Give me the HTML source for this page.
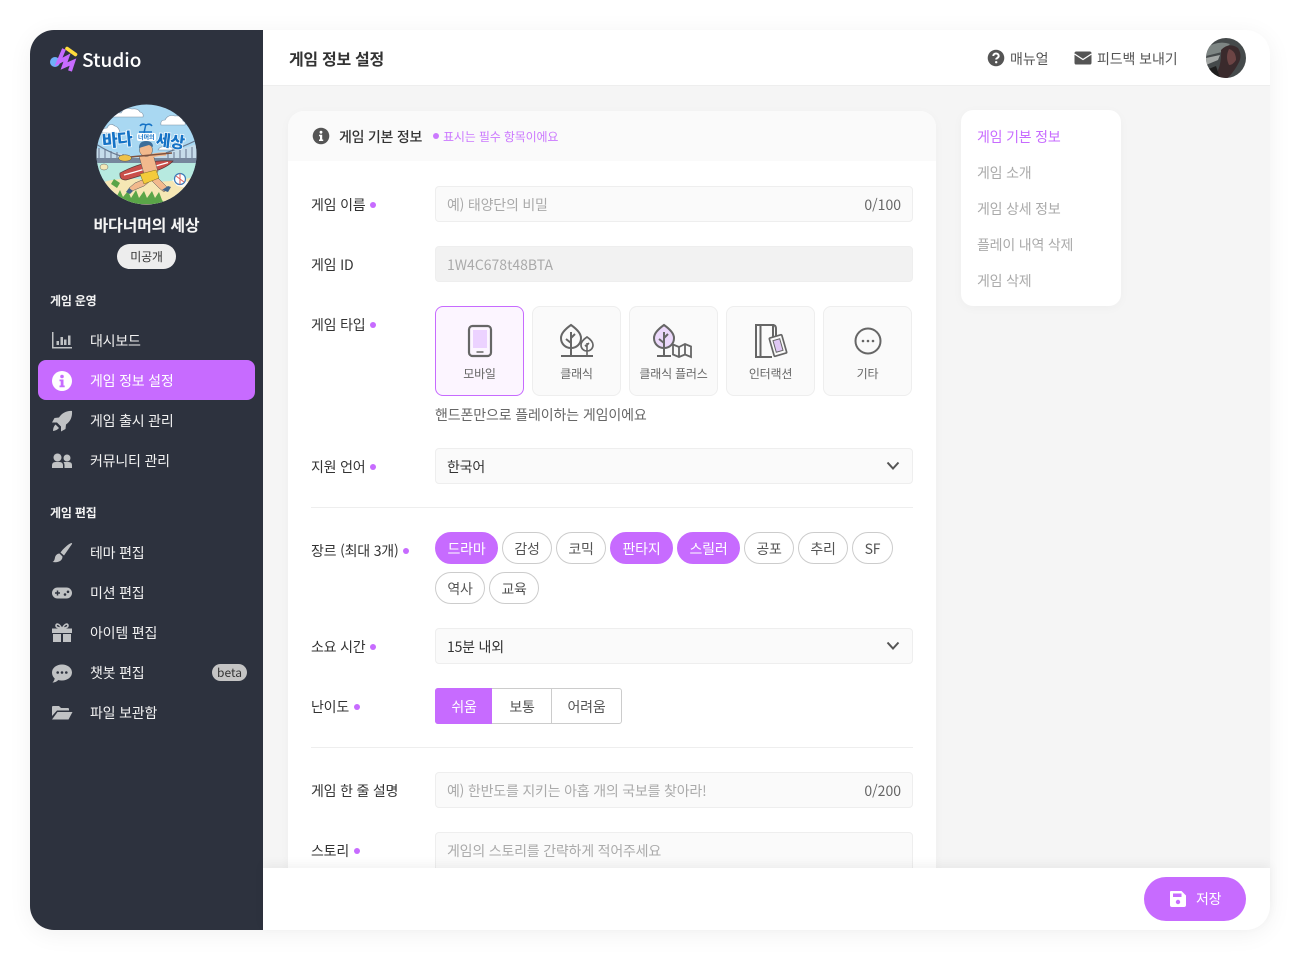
<!DOCTYPE html>
<html lang="ko"><head><meta charset="utf-8"><title>게임 정보 설정</title>
<style>
*{box-sizing:border-box;margin:0;padding:0}
html,body{width:1300px;height:960px;background:#fff;overflow:hidden}
body{font-family:"Noto Sans CJK KR","Liberation Sans",sans-serif;color:#333;position:relative;font-size:14px;letter-spacing:-.2px}
.a{position:absolute;white-space:nowrap}
#app{position:absolute;left:30px;top:30px;width:1240px;height:900px;border-radius:24px;overflow:hidden;background:#f5f5f5}
#shadow{position:absolute;left:30px;top:30px;width:1240px;height:900px;border-radius:24px;box-shadow:0 4px 24px rgba(0,0,0,.06)}
#side{position:absolute;left:0;top:0;width:233px;height:900px;background:#2d323e}
.si{position:absolute;left:60px;color:#f2f2f2;font-size:14px;line-height:20px;white-space:nowrap}
.sh{position:absolute;left:20px;color:#f4f4f4;font-size:12px;font-weight:700;line-height:18px}
.ic{position:absolute;left:21px;width:22px;height:22px}
.lb{position:absolute;left:311px;font-size:14px;line-height:20px;color:#333;white-space:nowrap}
.dot{display:inline-block;width:6px;height:6px;border-radius:50%;background:#c76bff;margin-left:5px;vertical-align:2px}
.inp{position:absolute;left:435px;width:478px;height:36px;background:#fafafa;border:1px solid #eee;border-radius:4px;line-height:36px;padding:0 11px;font-size:14px;color:#aaa;white-space:nowrap}
.cnt{position:absolute;right:11px;top:0;color:#666;letter-spacing:0}
.type{position:absolute;top:306px;width:89px;height:90px;background:#fafafa;border:1px solid #eee;border-radius:8px}
.type span{position:absolute;left:0;right:0;top:58px;text-align:center;font-size:12px;line-height:18px;color:#666;white-space:nowrap}
.type svg{position:absolute;left:-1px;top:-1px}
.chip{position:absolute;height:32px;border:1px solid #ccc;border-radius:16px;background:#fff;text-align:center;line-height:32px;font-size:14px;color:#555}
.chip.on{background:#c76bff;border-color:#c76bff;color:#fff}
.hr{position:absolute;left:311px;width:602px;height:1px;background:#eee}
.nav{position:absolute;left:977px;font-size:14px;line-height:20px;color:#aaa;white-space:nowrap}
</style></head><body>
<div id="shadow"></div>
<div id="app">
<div id="side"></div>
<div class="a" style="left:233px;top:0;width:1007px;height:56px;background:#fff;border-bottom:1px solid #eee"></div>
</div>

<!-- sidebar logo -->
<svg class="a" style="left:49px;top:45px" width="30" height="29" viewBox="0 0 30 29">
<circle cx="6" cy="17" r="5" fill="#6fb0f7"/>
<path d="M15 4L9.500 17 18 12.500 15 21 24 17 21 26" fill="none" stroke="#c76bff" stroke-width="4"/>
<path d="M18 3.500L26.500 9.500" stroke="#ffdc3c" stroke-width="3.600" stroke-linecap="round"/>
</svg>
<div class="a" style="left:82px;top:45px;font-size:19px;line-height:29px;font-weight:500;color:#fff;letter-spacing:0">Studio</div>

<!-- game avatar -->
<svg class="a" style="left:96px;top:104px" width="101" height="101" viewBox="0 0 101 101">
<defs><clipPath id="cp"><circle cx="50.500" cy="50.500" r="50"/></clipPath></defs>
<g clip-path="url(#cp)">
<rect width="101" height="101" fill="#a9d8f2"/>
<path d="M17 13q2-5 8-4 3-6 11-4 6-1 8 3 4 1 3 5z M65 21q-1-5 4-5 3-6 10-4 7-1 8 5 3 1 2 4z M6 29q0-5 5-5 3-6 8-2 4 1 5 7z M62 46q2-4 6-3 3-3 6 0 2 0 3 3z" fill="#fff" stroke="#7f93a6" stroke-width=".6"/>
<path d="M0 44L50 55 101 40V55H0z" fill="#c6dcea"/>
<path d="M3 44V55M9 45V55M15 47V55M21 48V55M27 50V55M72 50V55M78 48V55M84 46V55M90 45V55M96 43V55" stroke="#7d8da3" stroke-width="1.300"/>
<path d="M0 40Q28 58 50 54T101 36" fill="none" stroke="#65778f" stroke-width="1.200"/>
<rect y="54" width="101" height="5" fill="#76879d"/>
<rect y="59" width="101" height="18" fill="#b7eae0"/>
<path d="M0 80Q25 72 50 76T101 72V101H0z" fill="#f6e7b4"/>
<path d="M76 76l8-2 8 4 7 3-8 3-10-2z" fill="#fff" opacity=".8"/>
<path d="M10 100L17 88l3 6 4-8 3 7 5-6 3 7 5-8 3 8 5-7 3 7 5-7 3 7 4-6 3 8 3 4z" fill="#5aa548"/>
<path d="M18 75l6 4-3 5-6-4z" fill="#5aa548"/>
<ellipse cx="8" cy="63" rx="4" ry="3" fill="#f3e8b8" stroke="#666" stroke-width=".5"/>
<!-- board -->
<path d="M24 69Q50 55 77 57 72 63 57 68L30 76q-7 0-6-7z" fill="#c94f4a" stroke="#5a3a3a" stroke-width=".7"/>
<path d="M28 71L72 58.500" stroke="#fff" stroke-width="1.300"/>
<!-- legs -->
<path d="M46 76L39 79 33 84 36 87 48 82 53 78z" fill="#f2b98d" stroke="#555" stroke-width=".5"/>
<path d="M55 76L63 84 68 88 72 84 66 78 60 72z" fill="#f2b98d" stroke="#555" stroke-width=".5"/>
<path d="M66 86l6 2 3-5-3-1z" fill="#41648a"/>
<path d="M33 84l-3 4 4 2 3-3z" fill="#41648a"/>
<!-- body -->
<path d="M43 52L57 50 62 68 48 70z" fill="#f2b98d" stroke="#555" stroke-width=".5"/>
<path d="M44 70L60 66 63 74 48 80z" fill="#f3cb3a" stroke="#7a6a20" stroke-width=".5"/>
<circle cx="50" cy="46" r="6.500" fill="#f2b98d" stroke="#555" stroke-width=".5"/>
<path d="M43 44q0-7 7-7 7 0 7 6l-4-2z" fill="#3d6e9a"/>
<path d="M55 52Q62 50 70 50" stroke="#f2b98d" stroke-width="3.500" fill="none"/>
<!-- paddle -->
<path d="M76 49L34 53" stroke="#7e5240" stroke-width="1.500"/>
<ellipse cx="29" cy="54" rx="6.500" ry="3.200" fill="#eec24a" stroke="#555" stroke-width=".5"/>
<!-- ball -->
<circle cx="84" cy="75" r="5.500" fill="#fff" stroke="#3a79b8" stroke-width="1.200"/><path d="M80 72l8 6M84 69.500v11" stroke="#e0615a" stroke-width="1"/>
<!-- title -->
<g font-family="'Noto Sans CJK KR',sans-serif" font-weight="900" fill="#1573c6" stroke="#fff" stroke-width="1.400" paint-order="stroke" letter-spacing="-.5">
<text x="6" y="42" font-size="17" transform="rotate(-5 20 36)">바다</text>
<text x="60" y="43" font-size="16" transform="rotate(7 75 37)">세상</text>
</g>
<rect x="41" y="29" width="19" height="8" rx="2" fill="#fff"/>
<text x="42" y="35.500" font-family="'Noto Sans CJK KR',sans-serif" font-size="6" font-weight="700" fill="#1573c6" letter-spacing="0">너머의</text>
<path d="M48 29Q49 24 50 20M50 21q-4-2-6 1M50 21q4-2 6 1M43 28h13" fill="none" stroke="#1573c6" stroke-width="1.500"/>
</g></svg>
<div class="a" style="left:30px;width:233px;top:213px;text-align:center;font-size:16px;font-weight:700;color:#f5f5f5;line-height:22px;letter-spacing:-.2px">바다너머의 세상</div>
<div class="a" style="left:117px;top:244px;width:59px;height:25px;border-radius:13px;background:#ededed;text-align:center;font-size:12px;line-height:25px;color:#333">미공개</div>

<div id="menu" style="position:absolute;left:30px;top:30px;width:233px;height:900px">
<div class="sh" style="top:262px">게임 운영</div>
<div class="a" style="left:8px;top:330px;width:217px;height:40px;background:#c76bff;border-radius:8px"></div>
<div class="si" style="top:301px">대시보드</div>
<div class="si" style="top:341px;color:#fff">게임 정보 설정</div>
<div class="si" style="top:381px">게임 출시 관리</div>
<div class="si" style="top:421px">커뮤니티 관리</div>
<div class="sh" style="top:474px">게임 편집</div>
<div class="si" style="top:513px">테마 편집</div>
<div class="si" style="top:553px">미션 편집</div>
<div class="si" style="top:593px">아이템 편집</div>
<div class="si" style="top:633px">챗봇 편집</div>
<div class="si" style="top:673px">파일 보관함</div>
<div class="a" style="left:182px;top:634px;width:35px;height:17px;border-radius:9px;background:#c4c4c4;color:#333;font-size:12px;line-height:17px;text-align:center;letter-spacing:0">beta</div>

<svg class="ic" style="top:300px" viewBox="0 0 22 22" fill="#c0c2c4"><path d="M1 2h1.500v15H21v1.500H1z"/><rect x="5.500" y="11" width="2.500" height="4"/><rect x="9.500" y="7" width="2.500" height="8"/><rect x="13" y="9.500" width="2.500" height="5.500"/><rect x="17" y="5.500" width="2.500" height="9.500"/></svg>
<svg class="ic" style="top:340px" viewBox="0 0 22 22"><circle cx="11" cy="11" r="10" fill="#fff"/><circle cx="11" cy="6.500" r="1.800" fill="#c76bff"/><path d="M8.500 9.500h4v6h1.200v1.800H8.500v-1.800h1.200v-4.200H8.500z" fill="#c76bff"/></svg>
<svg class="ic" style="top:380px" viewBox="0 0 22 22" fill="#c0c2c4"><path d="M21 1c.5 5.500-1.500 10.500-6 13.500l-.5 4.500-4.500 2.500V16.500L6 12.500H1L3.500 8 8 7.500C11 3 16 .5 21 1z"/><path d="M4.500 14.500l3.500 3.500q-2 2.500-6 3 0-4 2.500-6.500z"/></svg>
<svg class="ic" style="top:420px" viewBox="0 0 22 22" fill="#c0c2c4"><circle cx="6.500" cy="7.500" r="4"/><circle cx="16" cy="8" r="3.500"/><path d="M1 18v-2.500q0-3.500 3.500-3.500h4q3.500 0 3.500 3.500V18z"/><path d="M13.500 18v-3q0-1.500-1-3h5q3.500 0 3.500 3v3z"/></svg>
<svg class="ic" style="top:512px" viewBox="0 0 22 22" fill="#c0c2c4"><path d="M20.500 1c.5 0 .8.500.5 1L13 13.500 9.500 10.500C12 7 17 2 20.500 1z"/><path d="M8.500 11.500l3 3c0 4-3.500 6.500-10 5.500 2-1 2-2.500 2.500-4.500.5-2.500 2.500-4 4.500-4z"/></svg>
<svg class="ic" style="top:552px" viewBox="0 0 22 22"><rect x="1" y="5.500" width="20" height="11" rx="5.500" fill="#c0c2c4"/><path d="M6.500 8.500v5M4 11h5" stroke="#2d323e" stroke-width="1.500"/><circle cx="14" cy="12.500" r="1.300" fill="#2d323e"/><circle cx="17" cy="9.800" r="1.300" fill="#2d323e"/></svg>
<svg class="ic" style="top:592px" viewBox="0 0 22 22" fill="#c0c2c4"><rect x="1" y="6.500" width="20" height="4.500"/><rect x="2" y="12" width="8" height="8"/><rect x="12" y="12" width="8" height="8"/><path d="M10.500 6C7 6 5 5 5 3.500S7.500 .5 10.500 6zM11.500 6C15 6 17 5 17 3.500S14.500 .5 11.500 6z" fill="none" stroke="#c0c2c4" stroke-width="1.600"/></svg>
<svg class="ic" style="top:632px" viewBox="0 0 22 22"><path d="M11 2.500c5.500 0 10 3.400 10 8s-4.500 8-10 8c-1.300 0-2.600-.2-3.700-.5C6 19.500 3.500 20.500 1.500 20.500c1.200-1.200 2-2.600 2.200-4C2 15 1 12.900 1 10.500c0-4.600 4.500-8 10-8z" fill="#c0c2c4"/><circle cx="6.700" cy="10.500" r="1.300" fill="#2d323e"/><circle cx="11" cy="10.500" r="1.300" fill="#2d323e"/><circle cx="15.300" cy="10.500" r="1.300" fill="#2d323e"/></svg>
<svg class="ic" style="top:672px" viewBox="0 0 22 22" fill="#c0c2c4"><path d="M1 5q0-1 1-1h6l2 2h7q1 0 1 1v1.500H6L1 14z"/><path d="M6.500 10H21.500L17.500 17.500H1z"/></svg>
</div>

<!-- header -->
<div class="a" style="left:289px;top:46px;font-size:16px;font-weight:700;color:#333;line-height:24px;letter-spacing:-.3px">게임 정보 설정</div>
<svg class="a" style="left:987px;top:49px" width="18" height="18" viewBox="0 0 18 18"><circle cx="9" cy="9" r="8.300" fill="#555"/><path d="M6.300 7c0-3.300 5.400-3.300 5.400 0 0 2-2.500 1.800-2.500 3.500" fill="none" stroke="#fff" stroke-width="2"/><circle cx="9.200" cy="13.200" r="1.200" fill="#fff"/></svg>
<div class="a" style="left:1010px;top:49px;font-size:14px;line-height:20px;color:#555;letter-spacing:-.05px">매뉴얼</div>
<svg class="a" style="left:1074px;top:51px" width="18" height="14" viewBox="0 0 18 14"><rect x=".5" y=".5" width="17" height="13" rx="1.800" fill="#555"/><path d="M.5 3L9 8.500 17.500 3" fill="none" stroke="#fff" stroke-width="1.300"/></svg>
<div class="a" style="left:1097px;top:49px;font-size:14px;line-height:20px;color:#555;letter-spacing:-.1px">피드백 보내기</div>
<svg class="a" style="left:1206px;top:38px" width="40" height="40" viewBox="0 0 40 40"><defs><clipPath id="cq"><circle cx="20" cy="20" r="20"/></clipPath></defs><g clip-path="url(#cq)"><rect width="40" height="40" fill="#454a4b"/><path d="M0 10Q12 2 24 6L16 14 0 18z" fill="#7d8583"/><path d="M0 20l14-3-2 5-12 5z" fill="#a3a7a5"/><path d="M15 12q8-8 17-2 5 8 0 16-3 6-10 14H8q8-12 7-28z" fill="#3a2a2c"/><path d="M23 11q7 2 7 11-3 5-7 5-4-8 0-16z" fill="#6c4444"/><path d="M0 32l10-4 4 12H0z" fill="#1e1e1e"/></g></svg>

<!-- main card -->
<div class="a" style="left:288px;top:111px;width:648px;height:800px;background:#fff;border-radius:16px 16px 0 0;box-shadow:0 2px 10px rgba(0,0,0,.03)"></div>
<div class="a" style="left:288px;top:111px;width:648px;height:50px;background:#fafafa;border-radius:16px 16px 0 0"></div>
<svg class="a" style="left:312px;top:127px" width="18" height="18" viewBox="0 0 18 18"><circle cx="9" cy="9" r="8.300" fill="#555"/><circle cx="9" cy="5.200" r="1.400" fill="#fff"/><path d="M7 7.700h3.200v4.800h1v1.500H7v-1.500h1v-3.300H7z" fill="#fff"/></svg>
<div class="a" style="left:339px;top:127px;font-size:14px;font-weight:500;line-height:20px;color:#333;letter-spacing:-.25px">게임 기본 정보</div>
<div class="a" style="left:433px;top:128px;font-size:12px;line-height:18px;color:#c76bff;opacity:.9;letter-spacing:-.15px"><span class="dot" style="margin:0 4px 0 0;vertical-align:2px"></span>표시는 필수 항목이에요</div>

<div class="lb" style="top:195px">게임 이름<span class="dot"></span></div>
<div class="inp" style="top:186px">예) 태양단의 비밀<span class="cnt">0/100</span></div>
<div class="lb" style="top:255px">게임 ID</div>
<div class="inp" style="top:246px;background:#f2f2f2;letter-spacing:0">1W4C678t48BTA</div>
<div class="lb" style="top:315px">게임 타입<span class="dot"></span></div>

<div class="type" style="left:435px;background:#fcf5ff;border-color:#c76bff"><svg width="89" height="90" viewBox="0 0 89 90" fill="none" stroke="#666" stroke-width="2.200"><rect x="34" y="20" width="22" height="30" rx="3.500"/><rect x="38" y="24" width="14" height="18" fill="#ecd2ff" stroke="none"/><path d="M41.500 46h7" stroke-width="1.500"/></svg><span>모바일</span></div>
<div class="type" style="left:532px"><svg width="89" height="90" viewBox="0 0 89 90" fill="none" stroke="#666" stroke-width="2"><path d="M29 50h32"/><path d="M39 50V26M39 37l-5-4M39 32l4-4"/><path d="M39 19c-5 3.500-10 8-10 13 0 6 4.500 10 10 10s10-4 10-10c0-5-5-9.500-10-13z"/><path d="M55 50V37M55 41l-2-2M55 39l2-2" stroke-width="1.600"/><path d="M55 31c-3 2-6 5-6 8 0 3.500 2.700 6 6 6s6-2.500 6-6c0-3-3-6-6-8z" stroke-width="1.700"/></svg><span>클래식</span></div>
<div class="type" style="left:629px"><svg width="89" height="90" viewBox="0 0 89 90" fill="none" stroke="#666" stroke-width="2"><path d="M35 19c-5 3.500-10 8-10 13 0 6 4.500 10 10 10s10-4 10-10c0-5-5-9.500-10-13z" fill="#ecd9fb"/><path d="M28 50h14M35 50V26M35 37l-5-4M35 32l4-4"/><path d="M44 38.500l6 2.500 6-3 6 2.500V51l-6-2.500-6 2.500-6-2.500z M50 41V51M56 38v10.500" stroke-width="1.800"/></svg><span>클래식 플러스</span></div>
<div class="type" style="left:726px"><svg width="89" height="90" viewBox="0 0 89 90" fill="none" stroke="#666" stroke-width="2"><path d="M47 36V19H30v32h16"/><path d="M34.500 19v32"/><path d="M47 19q3 0 3 4v10"/><rect x="45.500" y="30" width="13" height="19" rx="1" transform="rotate(-16 52 39.500)" fill="#fafafa" stroke-width="1.700"/><rect x="48.500" y="33.500" width="7" height="12" transform="rotate(-16 52 39.500)" fill="#e0c8f5" stroke-width="1"/></svg><span>인터랙션</span></div>
<div class="type" style="left:823px"><svg width="89" height="90" viewBox="0 0 89 90" fill="none" stroke="#666" stroke-width="2"><circle cx="45" cy="35" r="12.500"/><circle cx="40" cy="35" r="1.300" fill="#666" stroke="none"/><circle cx="45" cy="35" r="1.300" fill="#666" stroke="none"/><circle cx="50" cy="35" r="1.300" fill="#666" stroke="none"/></svg><span>기타</span></div>
<div class="a" style="left:435px;top:405px;font-size:14px;line-height:20px;color:#666;letter-spacing:-.13px">핸드폰만으로 플레이하는 게임이에요</div>

<div class="lb" style="top:457px">지원 언어<span class="dot"></span></div>
<div class="inp" style="top:448px;color:#333">한국어</div>
<svg class="a" style="left:886px;top:461px" width="14" height="10" viewBox="0 0 14 10"><path d="M1.500 1.500L7 7.500l5.500-6" fill="none" stroke="#555" stroke-width="2"/></svg>
<div class="hr" style="top:507px"></div>

<div class="lb" style="top:541px">장르 (최대 3개)<span class="dot"></span></div>
<div class="chip on" style="left:435px;top:532px;width:63px">드라마</div>
<div class="chip" style="left:502px;top:532px;width:50px">감성</div>
<div class="chip" style="left:556px;top:532px;width:50px">코믹</div>
<div class="chip on" style="left:610px;top:532px;width:63px">판타지</div>
<div class="chip on" style="left:677px;top:532px;width:63px">스릴러</div>
<div class="chip" style="left:744px;top:532px;width:50px">공포</div>
<div class="chip" style="left:798px;top:532px;width:50px">추리</div>
<div class="chip" style="left:852px;top:532px;width:41px">SF</div>
<div class="chip" style="left:435px;top:572px;width:50px">역사</div>
<div class="chip" style="left:489px;top:572px;width:50px">교육</div>

<div class="lb" style="top:637px">소요 시간<span class="dot"></span></div>
<div class="inp" style="top:628px;color:#333">15분 내외</div>
<svg class="a" style="left:886px;top:641px" width="14" height="10" viewBox="0 0 14 10"><path d="M1.500 1.500L7 7.500l5.500-6" fill="none" stroke="#555" stroke-width="2"/></svg>

<div class="lb" style="top:697px">난이도<span class="dot"></span></div>
<div class="a" style="left:435px;top:688px;width:187px;height:36px;border:1px solid #ccc;border-radius:3px;background:#fff"></div>
<div class="a" style="left:435px;top:688px;width:57px;height:36px;background:#c76bff;border-radius:3px 0 0 3px;color:#fff;text-align:center;line-height:38px;padding-left:1px">쉬움</div>
<div class="a" style="left:492px;top:688px;width:60px;height:36px;border-right:1px solid #ccc;color:#555;text-align:center;line-height:38px;padding-left:1px">보통</div>
<div class="a" style="left:552px;top:688px;width:70px;height:36px;color:#555;text-align:center;line-height:38px;padding-right:1px">어려움</div>
<div class="hr" style="top:747px"></div>

<div class="lb" style="top:781px">게임 한 줄 설명</div>
<div class="inp" style="top:772px">예) 한반도를 지키는 아홉 개의 국보를 찾아라!<span class="cnt">0/200</span></div>
<div class="lb" style="top:841px">스토리<span class="dot"></span></div>
<div class="inp" style="top:832px;height:60px">게임의 스토리를 간략하게 적어주세요</div>

<!-- right nav -->
<div class="a" style="left:961px;top:110px;width:160px;height:196px;background:#fff;border-radius:12px;box-shadow:0 2px 10px rgba(0,0,0,.03)"></div>
<div class="nav" style="top:127px;color:#c76bff">게임 기본 정보</div>
<div class="nav" style="top:163px">게임 소개</div>
<div class="nav" style="top:199px">게임 상세 정보</div>
<div class="nav" style="top:235px">플레이 내역 삭제</div>
<div class="nav" style="top:271px">게임 삭제</div>

<!-- footer -->
<div class="a" style="left:263px;top:868px;width:1007px;height:62px;background:#fff;border-radius:0 0 24px 0;box-shadow:0 -4px 10px rgba(0,0,0,.05)"></div>
<div class="a" style="left:1144px;top:877px;width:102px;height:44px;border-radius:22px;background:#c76bff"></div>
<svg class="a" style="left:1169px;top:890px" width="18" height="18" viewBox="0 0 18 18"><path d="M2 1h10.500L17 5.500V15q0 2-2 2H3q-2 0-2-2V2q0-1 1-1z" fill="#fff"/><rect x="4" y="3.500" width="8.500" height="3.500" fill="#c76bff"/><circle cx="9" cy="12" r="2.200" fill="#c76bff"/></svg>
<div class="a" style="left:1196px;top:889px;font-size:14px;line-height:20px;color:#fff">저장</div>
</body></html>
